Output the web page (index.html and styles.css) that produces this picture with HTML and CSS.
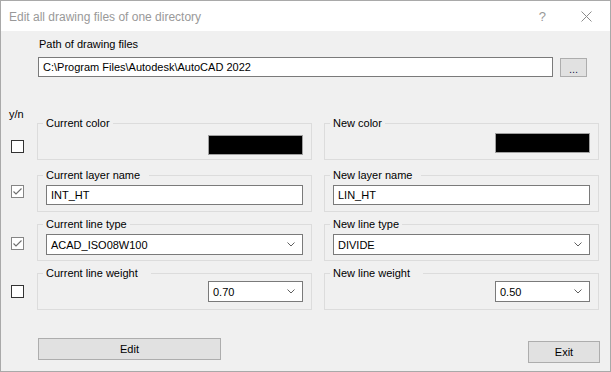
FILE: index.html
```html
<!DOCTYPE html>
<html>
<head>
<meta charset="utf-8">
<link rel="stylesheet" href="styles.css">
</head>
<body>
<div class="window">
  <div class="titlebar">
    <span class="title">Edit all drawing files of one directory</span>
    <span class="help">?</span>
    <svg class="close" width="11" height="11" viewBox="0 0 11 11"><path d="M0.5 0.5L10.5 10.5M10.5 0.5L0.5 10.5" stroke="#8c8c8c" stroke-width="1" fill="none"/></svg>
  </div>
  <div class="content">
    <div class="path-label">Path of drawing files</div>
    <div class="path-row">
      <div class="textbox path-box">C:\Program Files\Autodesk\AutoCAD 2022</div>
      <div class="button browse">...</div>
    </div>
    <div class="yn">y/n</div>
    <div class="rows">
      <div class="row r1">
        <div class="check c1"></div>
        <div class="group">
          <span class="legend">Current color</span>
          <div class="swatch"></div>
        </div>
        <div class="group right">
          <span class="legend">New color</span>
          <div class="swatch"></div>
        </div>
      </div>
      <div class="row r2">
        <div class="check c2 checked"><svg width="11" height="11" viewBox="0 0 11 11"><path d="M1.5 5.5L4 8L9.5 2.5" stroke="#6e6e6e" stroke-width="1.1" fill="none"/></svg></div>
        <div class="group">
          <span class="legend wide">Current layer name</span>
          <div class="textbox full">INT_HT</div>
        </div>
        <div class="group right">
          <span class="legend wide">New layer name</span>
          <div class="textbox full">LIN_HT</div>
        </div>
      </div>
      <div class="row r3">
        <div class="check c3 checked"><svg width="11" height="11" viewBox="0 0 11 11"><path d="M1.5 5.5L4 8L9.5 2.5" stroke="#6e6e6e" stroke-width="1.1" fill="none"/></svg></div>
        <div class="group">
          <span class="legend">Current line type</span>
          <div class="combo full"><span>ACAD_ISO08W100</span><svg width="8" height="5" viewBox="0 0 8 5"><path d="M0.5 0.5L4 4L7.5 0.5" stroke="#606060" stroke-width="1" fill="none"/></svg></div>
        </div>
        <div class="group right">
          <span class="legend">New line type</span>
          <div class="combo full"><span>DIVIDE</span><svg width="8" height="5" viewBox="0 0 8 5"><path d="M0.5 0.5L4 4L7.5 0.5" stroke="#606060" stroke-width="1" fill="none"/></svg></div>
        </div>
      </div>
      <div class="row r4">
        <div class="check c4"></div>
        <div class="group">
          <span class="legend widest">Current line weight</span>
          <div class="combo small"><span>0.70</span><svg width="8" height="5" viewBox="0 0 8 5"><path d="M0.5 0.5L4 4L7.5 0.5" stroke="#606060" stroke-width="1" fill="none"/></svg></div>
        </div>
        <div class="group right">
          <span class="legend widest">New line weight</span>
          <div class="combo small"><span>0.50</span><svg width="8" height="5" viewBox="0 0 8 5"><path d="M0.5 0.5L4 4L7.5 0.5" stroke="#606060" stroke-width="1" fill="none"/></svg></div>
        </div>
      </div>
    </div>
    <div class="actions">
      <div class="button edit">Edit</div>
      <div class="button exit">Exit</div>
    </div>
  </div>
</div>
</body>
</html>
```
FILE: styles.css
```css
html, body {
  margin: 0;
  padding: 0;
  background: #f0f0f0;
}
.window {
  width: 611px;
  height: 372px;
  box-sizing: border-box;
  border: 1px solid #a9a9a9;
  font-family: "Liberation Sans", Arial, sans-serif;
  font-size: 11px;
  color: #000;
  overflow: hidden;
}
.titlebar {
  height: 30px;
  background: #fff;
  display: flex;
  align-items: center;
  padding-left: 8px;
}
.title {
  color: #999;
  font-size: 12px;
  margin-top: 1px;
}
.help {
  margin-left: auto;
  color: #999;
  font-size: 13px;
  margin-top: 1px;
}
.close {
  margin-left: 35px;
  margin-right: 18px;
  margin-top: 1px;
}
.content {
  height: 340px;
  background: #f0f0f0;
  display: flex;
  flex-direction: column;
}
.path-label {
  margin-top: 7px;
  margin-left: 38px;
  line-height: 13px;
}
.path-row {
  margin-top: 6px;
  margin-left: 37px;
  display: flex;
  align-items: flex-start;
}
.textbox {
  box-sizing: border-box;
  height: 20px;
  border: 1px solid #7a7a7a;
  background: #fff;
  padding-left: 4px;
  display: flex;
  align-items: center;
  white-space: nowrap;
}
.path-box {
  width: 515px;
}
.button {
  box-sizing: border-box;
  border: 1px solid #adadad;
  background: #e1e1e1;
  display: flex;
  align-items: center;
  justify-content: center;
}
.browse {
  width: 27px;
  height: 19px;
  margin-top: 1px;
  margin-left: 7px;
  padding-top: 3px;
  color: #1a1a50;
}
.yn {
  margin-top: 31px;
  margin-left: 8px;
  line-height: 13px;
}
.rows {
  margin-top: 2px;
  display: flex;
  flex-direction: column;
}
.row {
  display: flex;
  align-items: flex-start;
  margin-top: 12px;
}
.row.r1 {
  margin-top: 0;
}
.row.r2 {
  margin-top: 15px;
}
.check {
  flex: none;
  box-sizing: border-box;
  width: 13px;
  height: 13px;
  border: 1px solid #333;
  background: #fff;
  margin-left: 10px;
  margin-right: 13px;
  margin-top: 12px;
  display: flex;
  align-items: center;
  justify-content: center;
}
.check.checked {
  border-color: #858585;
}
.check.c1 { margin-top: 17px; }
.check.c2 { margin-top: 10px; }
.check.c3 { margin-top: 13px; }
.check.c4 { margin-top: 12px; }
.group {
  position: relative;
  box-sizing: border-box;
  width: 275px;
  height: 37px;
  border: 1px solid #dcdcdc;
  padding: 9px 8px 0 8px;
  display: flex;
  align-items: flex-start;
}
.group.right {
  margin-left: 12px;
}
.r1 .group {
  justify-content: flex-end;
  padding-top: 11px;
}
.r1 .group.right {
  padding-top: 9px;
}
.r4 .group {
  justify-content: flex-end;
  padding-top: 7px;
}
.legend {
  position: absolute;
  top: -7px;
  left: 5px;
  line-height: 13px;
  padding: 0 3px 0 3px;
  background: #f0f0f0;
  white-space: nowrap;
}
.legend.wide {
  padding-right: 9px;
}
.legend.widest {
  padding-right: 13px;
}
.swatch {
  box-sizing: border-box;
  width: 95px;
  height: 20px;
  background: #000;
  border: 1px solid #a0a0a0;
}
.full {
  flex: 1;
}
.combo {
  box-sizing: border-box;
  height: 21px;
  border: 1px solid #7a7a7a;
  background: #fff;
  padding: 0 7px 0 4px;
  display: flex;
  align-items: center;
  justify-content: space-between;
  white-space: nowrap;
}
.combo svg {
  flex: none;
}
.combo.small {
  width: 95px;
}
.actions {
  margin-top: 28px;
  display: flex;
  align-items: flex-start;
}
.edit {
  margin-left: 37px;
  width: 183px;
  height: 22px;
}
.exit {
  margin-left: auto;
  margin-right: 10px;
  margin-top: 3px;
  width: 72px;
  height: 22px;
}
```
